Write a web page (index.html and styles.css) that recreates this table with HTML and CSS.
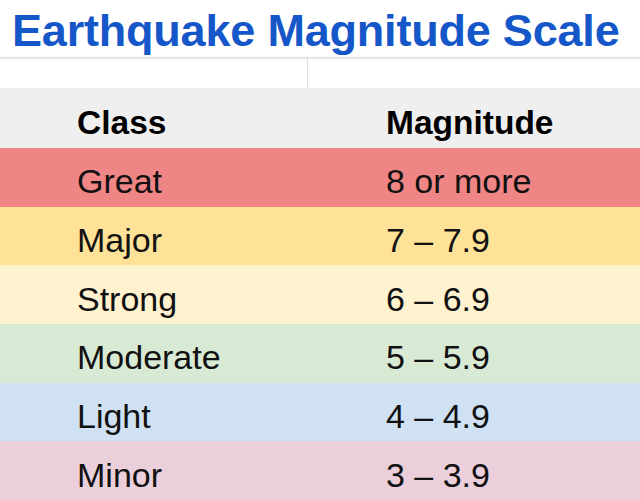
FILE: index.html
```html
<!DOCTYPE html>
<html>
<head>
<meta charset="utf-8">
<link rel="stylesheet" href="styles.css">
</head>
<body>
<div class="page">
  <h1 class="title">Earthquake Magnitude Scale</h1>
  <div class="row blank"><div class="cell"></div><div class="cell"></div></div>
  <div class="row head"><div class="cell">Class</div><div class="cell">Magnitude</div></div>
  <div class="row great"><div class="cell">Great</div><div class="cell">8 or more</div></div>
  <div class="row major"><div class="cell">Major</div><div class="cell">7 – 7.9</div></div>
  <div class="row strong"><div class="cell">Strong</div><div class="cell">6 – 6.9</div></div>
  <div class="row moderate"><div class="cell">Moderate</div><div class="cell">5 – 5.9</div></div>
  <div class="row light"><div class="cell">Light</div><div class="cell">4 – 4.9</div></div>
  <div class="row minor"><div class="cell">Minor</div><div class="cell">3 – 3.9</div></div>
</div>
</body>
</html>
```
FILE: styles.css
```css
html, body {
  margin: 0;
  padding: 0;
  background: #ffffff;
}
.page {
  width: 640px;
  height: 500px;
  overflow: hidden;
  font-family: "Liberation Sans", Arial, sans-serif;
  color: #111111;
}
.title {
  margin: 0;
  height: 58px;
  box-sizing: border-box;
  padding-left: 12px;
  font-size: 45px;
  font-weight: bold;
  line-height: 62px;
  letter-spacing: -0.2px;
  color: #1557c8;
  white-space: nowrap;
  border-bottom: 1px solid #dcdcdc;
  box-shadow: 0 1px 1px #eeeeee;
}
.row {
  display: grid;
  grid-template-columns: 308px 332px;
  height: 58.7px;
  align-items: center;
  font-size: 34px;
}
.row .cell {
  padding-top: 9px;
}
.row .cell:first-child {
  padding-left: 77px;
}
.row .cell:last-child {
  padding-left: 78px;
}
.blank {
  height: 30px;
  align-items: stretch;
}
.blank .cell {
  padding: 0;
}
.blank .cell:first-child {
  border-right: 1px solid #dddddd;
}
.head {
  height: 60px;
  background: #efefef;
  font-weight: bold;
  font-size: 33.5px;
  color: #000000;
}
.great { background: #f08585; }
.major { background: #fee297; }
.strong { background: #fff2cf; }
.moderate { background: #d9ead4; }
.light { background: #cfe1f3; }
.minor { background: #ebd0dc; }
```
